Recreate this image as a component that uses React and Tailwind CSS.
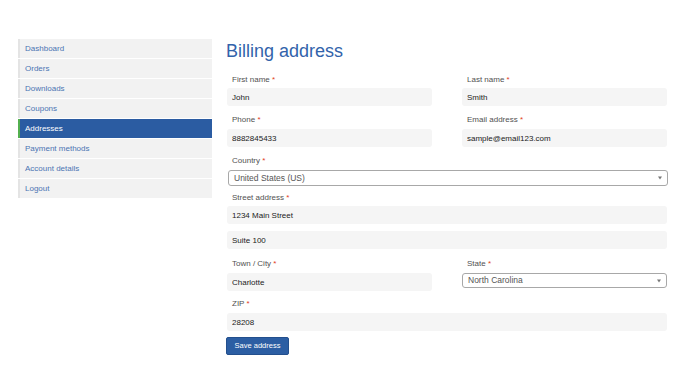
import React from "react";

const menu = [
  "Dashboard",
  "Orders",
  "Downloads",
  "Coupons",
  "Addresses",
  "Payment methods",
  "Account details",
  "Logout",
];

const Label = ({ text, className = "" }) => (
  <label className={`block h-[14px] leading-[14px] pl-[5px] text-[8px] text-[#515151] ${className}`}>
    {text} <span className="text-[#e2401c]">*</span>
  </label>
);

const Field = ({ value, className = "" }) => (
  <input
    readOnly
    value={value}
    className={`block w-full h-[18px] rounded-[3px] bg-[#f5f5f5] pl-[5px] text-[8px] text-[#222] outline-none ${className}`}
  />
);

const Select = ({ value, className = "" }) => (
  <div
    className={`relative flex items-center w-full rounded-[3px] border border-[#a8a8a8] bg-white pl-[5px] text-[8.5px] text-[#555] ${className}`}
  >
    <span>{value}</span>
    <span className="absolute right-[5px] top-1/2 -translate-y-1/2 w-0 h-0 border-l-[2.5px] border-r-[2.5px] border-t-[3px] border-l-transparent border-r-transparent border-t-[#777]" />
  </div>
);

const App = () => {
  return (
    <div className="flex w-full h-[368px] bg-white font-['Liberation_Sans',Arial,sans-serif]">
      <nav className="ml-[18px] mt-[39px] w-[194px] flex flex-col gap-[1px] self-start">
        {menu.map((item) => {
          const active = item === "Addresses";
          return (
            <div
              key={item}
              className={
                active
                  ? "h-[19px] flex items-center pl-[5px] border-l-2 border-[#53b04f] bg-[#2b5ca2] text-white text-[8px]"
                  : "h-[19px] flex items-center pl-[5px] border-l-2 border-[#e4e4e4] bg-[#f2f2f2] text-[#4b74b3] text-[8px]"
              }
            >
              {item}
            </div>
          );
        })}
      </nav>

      <main className="ml-[15px] w-[440px] pt-[39px]">
        <h1 className="h-[24px] leading-[24px] text-[18px] text-[#3263ab] -ml-[1px]">Billing address</h1>

        <div className="grid grid-cols-2 gap-x-[30px] mt-[10px]">
          <div>
            <Label text="First name" />
            <Field value="John" className="mt-[1px]" />
          </div>
          <div>
            <Label text="Last name" className="pl-[4px]" />
            <Field value="Smith" className="mt-[1px]" />
          </div>
        </div>

        <div className="grid grid-cols-2 gap-x-[30px] mt-[7px]">
          <div>
            <Label text="Phone" />
            <Field value="8882845433" className="mt-[2px]" />
          </div>
          <div>
            <Label text="Email address" className="pl-[4px]" />
            <Field value="sample@email123.com" className="mt-[2px]" />
          </div>
        </div>

        <div className="mt-[7px]">
          <Label text="Country" />
          <Select value="United States (US)" className="mt-[2px] h-[16px] ml-[1px] w-[439px]" />
        </div>

        <div className="mt-[5px]">
          <Label text="Street address" />
          <Field value="1234 Main Street" className="mt-[1px]" />
          <Field value="Suite 100" className="mt-[7px] h-[17px]" />
        </div>

        <div className="grid grid-cols-2 gap-x-[30px] mt-[8px]">
          <div>
            <Label text="Town / City" />
            <Field value="Charlotte" className="mt-[2px]" />
          </div>
          <div>
            <Label text="State" className="pl-[4px]" />
            <Select value="North Carolina" className="mt-[2px] h-[15px]" />
          </div>
        </div>

        <div className="mt-[6px]">
          <Label text="ZIP" />
          <Field value="28208" className="mt-[2px]" />
        </div>

        <button
          type="button"
          className="mt-[5px] -ml-[1px] h-[18px] w-[63px] rounded-[2px] border border-[#234f8d] bg-[#2c5ea3] text-[7.5px] text-white"
        >
          Save address
        </button>
      </main>
    </div>
  );
};

export default App;
